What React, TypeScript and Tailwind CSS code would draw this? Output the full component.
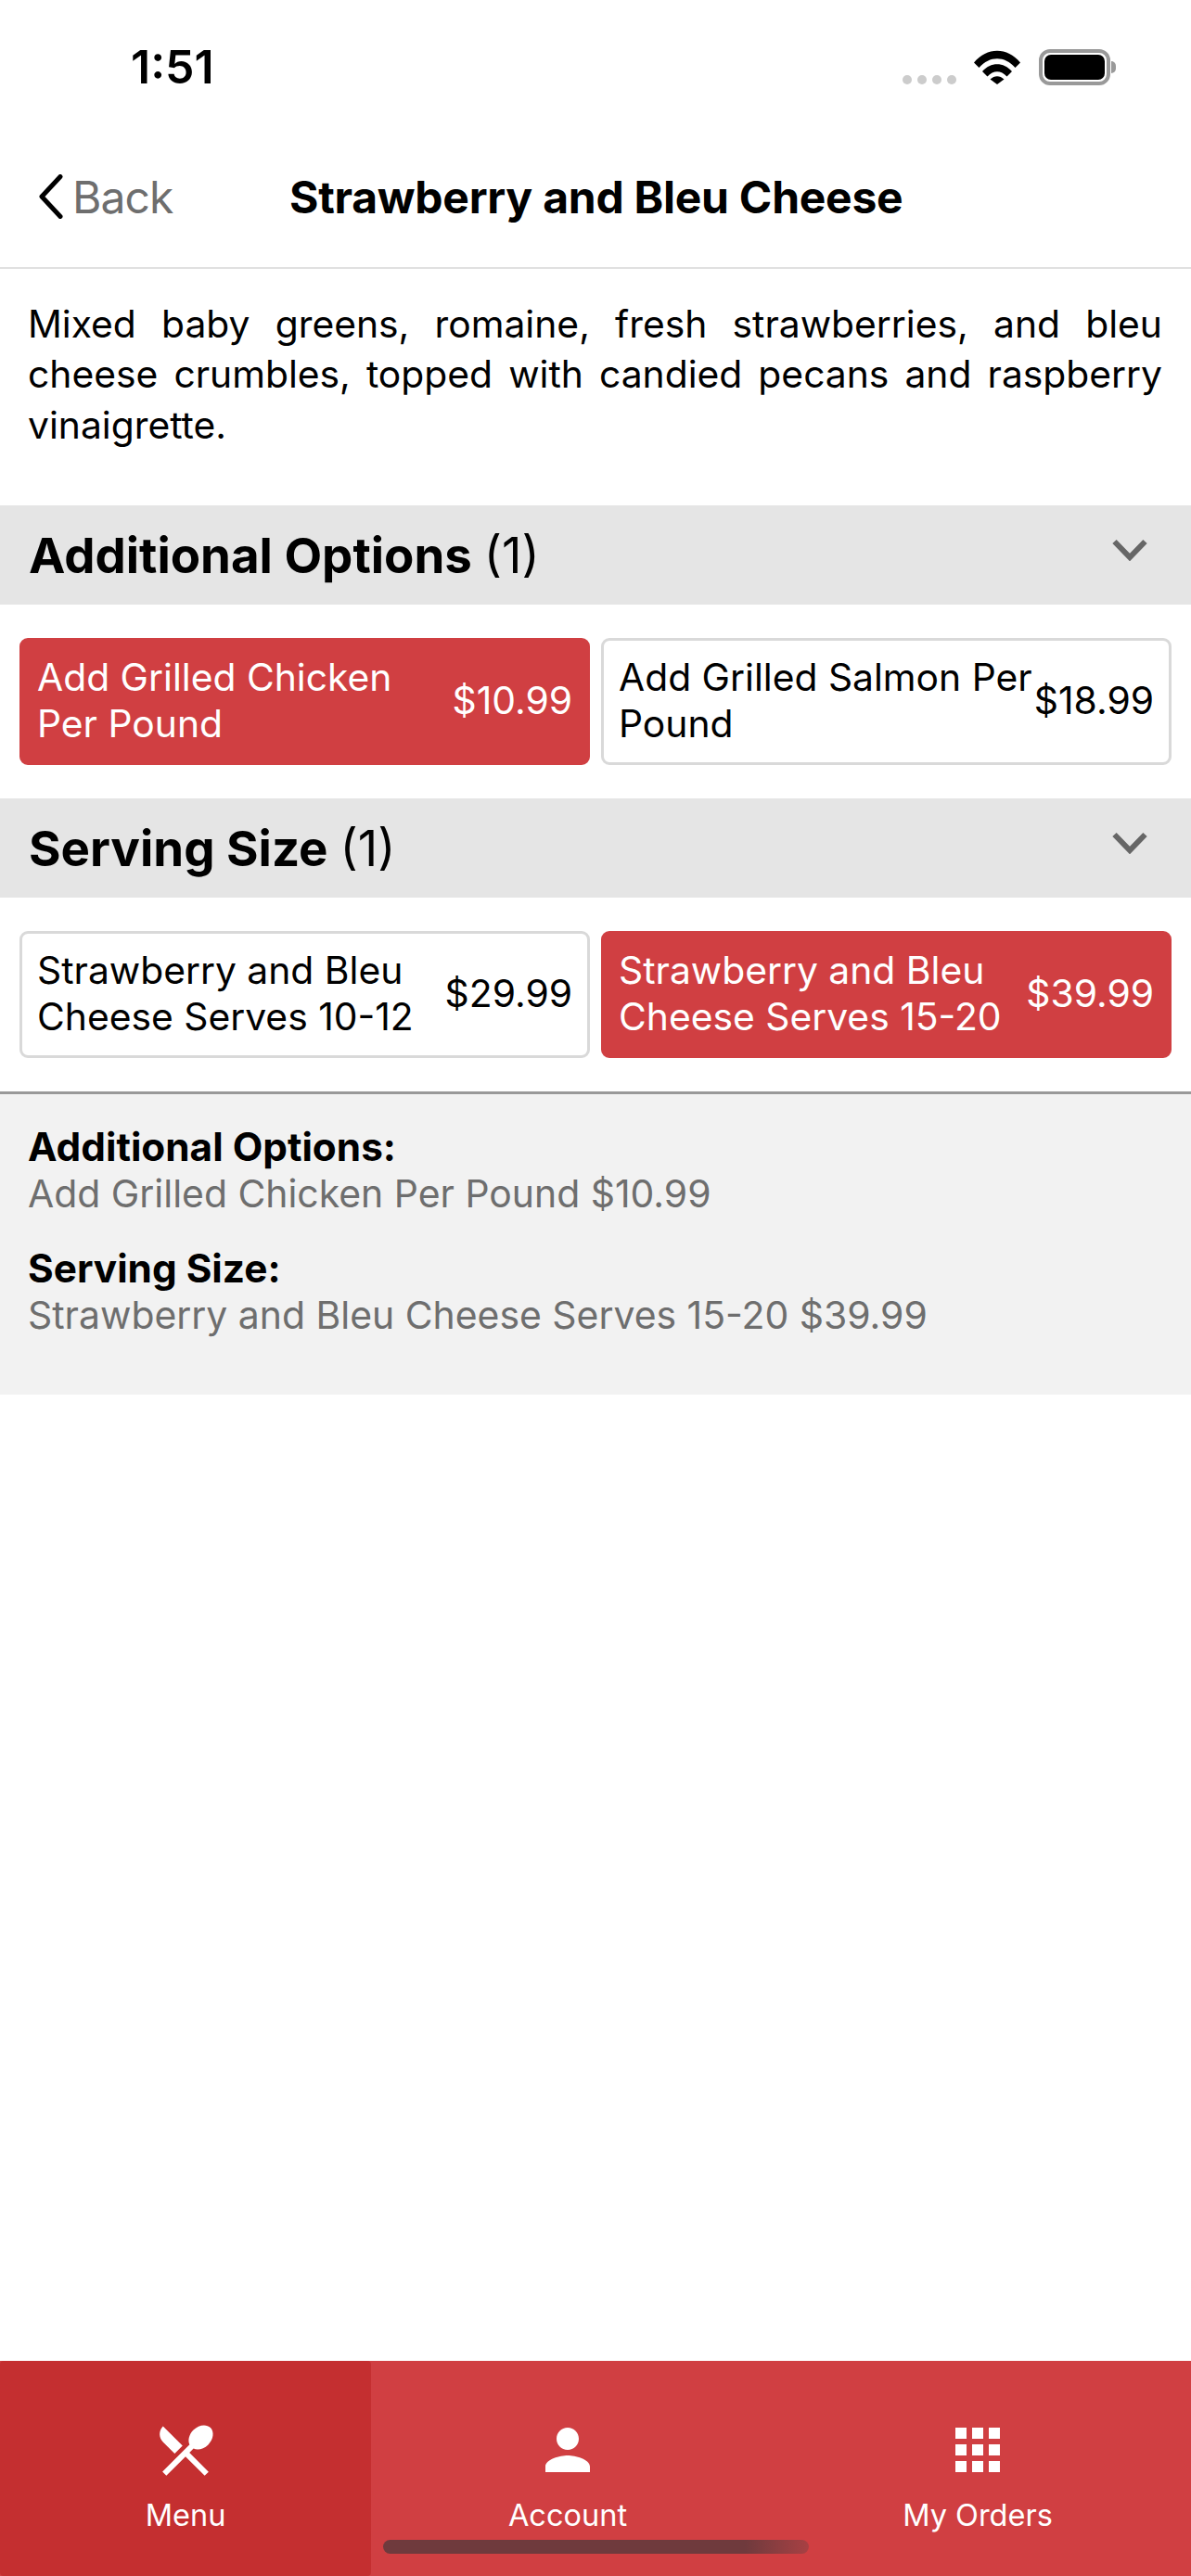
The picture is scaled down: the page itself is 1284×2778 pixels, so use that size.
import React from "react";

const OptionButton = ({ label, price, selected }: { label: React.ReactNode; price: string; selected?: boolean }) => (
  <div
    className={
      "flex-1 h-[137px] rounded-[9px] border-[3px] flex items-center justify-between pl-[16px] pr-[16px] pb-[3px] text-[40.8px] leading-[50px] " +
      (selected ? "bg-[#d03f42] border-[#d03f42] text-white" : "bg-white border-[#d9d9d9] text-black")
    }
  >
    <div>{label}</div>
    <div className="shrink-0">{price}</div>
  </div>
);

const SectionHeader = ({ title }: { title: string }) => (
  <div className="h-[107px] bg-[#e5e5e5] flex items-center justify-between pl-[31px] pr-[47px]">
    <div className="text-[52.800px] leading-[62px] text-black">
      <span className="font-bold">{title}</span>
      <span className="ml-[13px]">(1)</span>
    </div>
    <svg width="38" height="24" viewBox="0 0 38 24" className="mb-[12px]" fill="none">
      <path d="M2.500 3L19 20L35.500 3" stroke="#666666" strokeWidth="6" />
    </svg>
  </div>
);

const Tab = ({ className, label, d }: { className: string; label: string; d: string }) => (
  <div className={"flex flex-col items-center pt-[60px] " + className}>
    <svg width="72" height="72" viewBox="0 0 24 24" fill="#ffffff">
      <path d={d} />
    </svg>
    <div className="text-[32.500px] leading-[36px] text-white mt-[17px]">{label}</div>
  </div>
);

export default function App() {
  return (
    <div className="w-[1284px] h-[2778px] bg-white flex flex-col relative overflow-hidden font-['Inter','Liberation_Sans',sans-serif]">
      {/* status bar */}
      <div className="h-[130px] flex items-start justify-between pl-[141px] pr-[81px] pt-[44px]">
        <div className="text-[50px] leading-[56px] font-semibold text-black">1:51</div>
        <div className="flex items-start pt-[9px]">
          <div className="flex gap-[6px] mt-[28px] mr-[19px]">
            <div className="w-[10px] h-[10px] rounded-full bg-[#cccccc]" />
            <div className="w-[10px] h-[10px] rounded-full bg-[#cccccc]" />
            <div className="w-[10px] h-[10px] rounded-full bg-[#cccccc]" />
            <div className="w-[10px] h-[10px] rounded-full bg-[#cccccc]" />
          </div>
          <svg width="50" height="37" viewBox="0 0 50 37" className="mt-[1px] mr-[20px]">
            <path d="M0 13.500C14 -3.500 36 -3.500 50 13.500L44.500 19C33 6 17 6 5.500 19Z" fill="#000" />
            <path d="M9 23C18 12.500 32 12.500 41 23L35.500 28.500C29 21.500 21 21.500 14.500 28.500Z" fill="#000" />
            <path d="M17.500 31.500C22 27 28 27 32.500 31.500L25 37Z" fill="#000" />
          </svg>
          <div className="flex items-center">
            <div className="w-[77px] h-[39px] rounded-[12px] border-[4px] border-[#999999] p-[2px]">
              <div className="w-full h-full rounded-[7px] bg-black" />
            </div>
            <div className="w-[5px] h-[13px] rounded-r-full bg-[#999999] ml-[1px]" />
          </div>
        </div>
      </div>

      {/* nav */}
      <div className="h-[160px] border-b-[2px] border-[#e0e0e0] flex items-start pl-[41px] pt-[56px]">
        <svg width="27" height="48" viewBox="0 0 27 48" fill="none" className="mt-[2px]">
          <path d="M24 2.500L4 24L24 45.500" stroke="#000" strokeWidth="5" strokeLinecap="round" strokeLinejoin="round" />
        </svg>
        <div className="text-[48px] leading-[54px] tracking-[-0.9px] text-[#6e6e6e] ml-[10px] w-[234px]">Back</div>
        <div className="text-[48px] leading-[54px] tracking-[-0.25px] font-bold text-black">Strawberry and Bleu Cheese</div>
      </div>

      {/* description */}
      <div className="pl-[30px] pr-[31px] pt-[32px] pb-[60px] text-[40.800px] leading-[54.400px] text-black text-justify">
        Mixed baby greens, romaine, fresh strawberries, and bleu cheese crumbles, topped with candied pecans and raspberry vinaigrette.
      </div>

      <SectionHeader title="Additional Options" />
      <div className="flex gap-[12px] px-[21px] py-[36px]">
        <OptionButton selected label={<>Add Grilled Chicken<br />Per Pound</>} price="$10.99" />
        <OptionButton label={<>Add Grilled Salmon Per<br />Pound</>} price="$18.99" />
      </div>

      <SectionHeader title="Serving Size" />
      <div className="flex gap-[12px] px-[21px] py-[36px] border-b-[3px] border-[#999999]">
        <OptionButton label={<>Strawberry and Bleu<br />Cheese Serves 10-12</>} price="$29.99" />
        <OptionButton selected label={<>Strawberry and Bleu<br />Cheese Serves 15-20</>} price="$39.99" />
      </div>

      {/* summary */}
      <div className="h-[324px] bg-[#f2f2f2] pl-[30px] pr-[31px] pt-[32px] text-[40.900px] leading-[50px]">
        <div className="font-bold text-[42.300px] text-black">Additional Options:</div>
        <div className="text-[#6e6e6e]">Add Grilled Chicken Per Pound $10.99</div>
        <div className="font-bold text-[42.300px] text-black mt-[31px]">Serving Size:</div>
        <div className="text-[#6e6e6e]">Strawberry and Bleu Cheese Serves 15-20 $39.99</div>
      </div>

      <div className="flex-1" />

      {/* tab bar */}
      <div className="h-[232px] bg-[#d03f42] flex">
        <Tab
          className="w-[400px] bg-[#c42f30] rounded-[4px]"
          label="Menu"
          d="M8.100 13.340l2.830-2.830L3.910 3.500c-1.560 1.560-1.560 4.090 0 5.660l4.190 4.180zm6.780-1.810c1.530.71 3.680.21 5.270-1.380 1.910-1.910 2.280-4.650.81-6.120-1.460-1.460-4.200-1.100-6.120.81-1.590 1.590-2.090 3.740-1.380 5.270L3.700 19.870l1.410 1.410L12 14.410l6.880 6.880 1.410-1.410L13.410 13l1.470-1.470z"
        />
        <Tab
          className="w-[424px]"
          label="Account"
          d="M12 12c2.210 0 4-1.790 4-4s-1.790-4-4-4-4 1.790-4 4 1.790 4 4 4zm0 2c-2.670 0-8 1.340-8 4v2h16v-2c0-2.660-5.330-4-8-4z"
        />
        <Tab
          className="flex-1"
          label="My Orders"
          d="M4 8h4V4H4v4zm6 12h4v-4h-4v4zm-6 0h4v-4H4v4zm0-6h4v-4H4v4zm6 0h4v-4h-4v4zm6-10v4h4V4h-4zm-6 4h4V4h-4v4zm6 6h4v-4h-4v4zm0 6h4v-4h-4v4z"
        />
      </div>

      {/* home indicator overlay */}
      <div className="absolute left-[413px] top-[2739px] w-[459px] h-[15px] rounded-full bg-gradient-to-r from-[#6f3a3d] from-85% to-[#a84043]" />
    </div>
  );
}
